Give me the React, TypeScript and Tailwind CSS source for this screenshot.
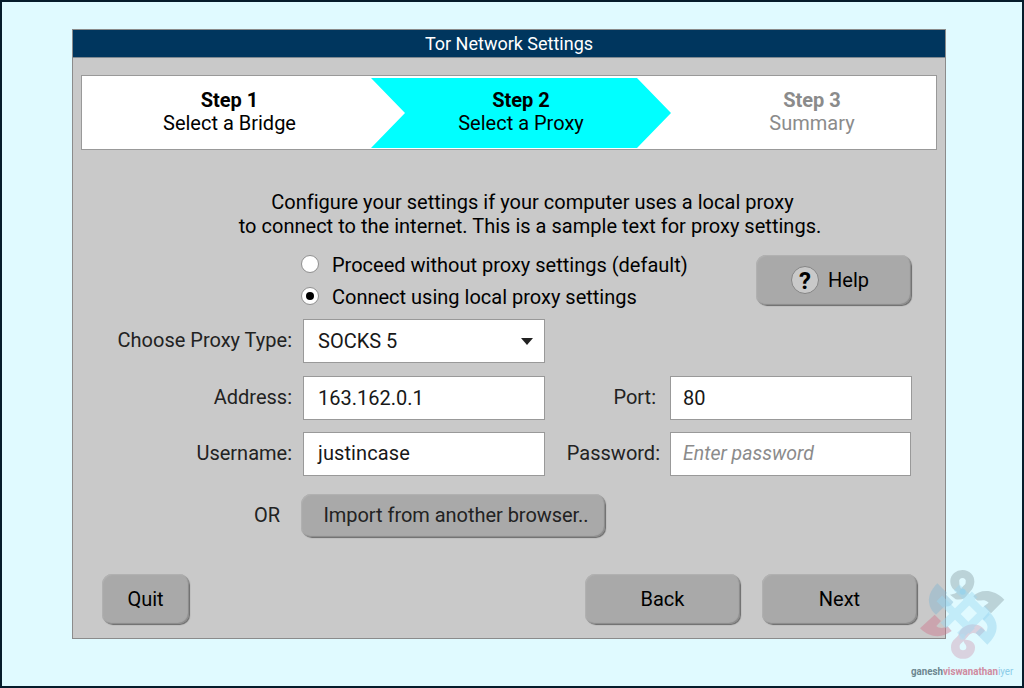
import type { ReactNode } from "react";

function Step({ title, label, className }: { title: string; label: string; className: string }) {
  return (
    <div className={`flex flex-col items-center text-[20px] leading-6 whitespace-nowrap ${className}`}>
      <span className="font-bold">{title}</span>
      <span className="-mt-px">{label}</span>
    </div>
  );
}

function Button({ children, className }: { children: ReactNode; className: string }) {
  return (
    <button
      type="button"
      className={`flex items-center justify-center rounded-[10px] bg-[#a9a9a9] text-[20px] whitespace-nowrap shadow-[inset_1px_1px_1px_#b2b2b2,inset_-1px_-1px_1px_#8a8a8a,1px_1px_1px_#6a6a6a] ${className}`}
    >
      {children}
    </button>
  );
}

function Radio({ checked, label }: { checked?: boolean; label: string }) {
  return (
    <label className="flex h-8 items-center">
      <span className="flex size-[18px] items-center justify-center rounded-full border border-[#8f8f8f] bg-white">
        {checked && <span className="size-2 rounded-full bg-black" />}
      </span>
      <span className="ml-[13px] pt-px text-[20px] whitespace-nowrap">{label}</span>
    </label>
  );
}

function Label({ children, className }: { children: ReactNode; className: string }) {
  return <span className={`pb-0.5 text-right text-[20px] whitespace-nowrap text-[#222] ${className}`}>{children}</span>;
}

function Field({ children, className }: { children: ReactNode; className: string }) {
  return (
    <div className={`flex h-11 items-center border border-[#999] bg-white whitespace-nowrap ${className}`}>
      {children}
    </div>
  );
}

function Watermark() {
  return (
    <div className="absolute top-[558px] left-[902px] h-[128px] w-[120px]">
      <svg viewBox="0 0 360 300" className="block h-[100px] w-[120px]" fill="none">
        <path fillRule="evenodd" d="M139 63A36 34 0 0 1 211 65C210 85 199 94 191 103C183 116 174 121 155 118L138 104C152 101 157 99 159 95C146 89 139 78 139 63ZM172 86C166 80 166 76 166 66A10 9 0 1 1 185 66C186 74 178 76 172 86Z" fill="#7f9299" fillOpacity="0.38" />
        <path d="M100 70C80 90 70 112 77 136C81 151 89 158 96 164L122 139C133 142 142 137 148 126L126 104C130 98 128 96 124 94Z" fill="#80b6d2" fillOpacity="0.42" />
        <path d="M208 109C226 88 268 84 301 119L261 160L240 139L254 128C239 114 226 126 218 120Z" fill="#7f9299" fillOpacity="0.38" />
        <path d="M48 205L92 164L111 183L97 198C107 207 120 204 131 199L143 213C119 232 81 238 48 205Z" fill="#cf788d" fillOpacity="0.45" />
        <path fillRule="evenodd" d="M243 212L226 229C219 219 207 215 196 224L183 239C202 238 214 250 213 263A36 34 0 0 1 141 262C141 242 153 239 163 226C168 205 186 193 206 193C224 194 236 200 243 212ZM178 243C172 251 166 252 167 262A10 9 0 0 0 187 262C187 253 182 253 178 243Z" fill="#cf9bb3" fillOpacity="0.42" />
        <path d="M255 155C287 184 286 220 250 254L215 219L231 203L247 215C256 197 247 188 235 178Z" fill="#8ccfeb" fillOpacity="0.42" />
        <g stroke="#9bd9f3" opacity="0.42" strokeWidth="24">
          <path d="M158 82L249 172" />
          <path d="M212 103L118 197" />
          <path d="M106 115L204 213" />
          <path d="M251 145L168 227" />
        </g>
        <circle cx="176" cy="95" r="9" fill="#8fd2ee" fillOpacity="0.6" />
        <circle cx="175" cy="230" r="9" fill="#b8dcee" fillOpacity="0.7" />
      </svg>
      <div className="ml-[6.5px] flex h-6 w-[140px] origin-left scale-x-[0.885] items-center text-[11px] font-bold whitespace-nowrap">
        <span className="text-[#6c8690]">ganesh</span>
        <span className="text-[#cf8ba0]">viswanathan</span>
        <span className="font-normal text-[#8bcde9]">iyer</span>
      </div>
    </div>
  );
}

export default function App() {
  return (
    <main className="relative h-[688px] w-[1024px] overflow-hidden border-2 border-[#061c2b] bg-[#e0faff] pt-[27px] pl-[70px] font-['Roboto',sans-serif] text-black">
      <section className="h-[610px] w-[874px] border border-[#8b8b8b] bg-[#c9c9c9]">
        <h1 className="flex h-7 items-center justify-center border-b border-[#7f8a92] bg-[#00365e] text-[18px] text-white">
          Tor Network Settings
        </h1>

        <div className="mt-[17px] ml-2 flex h-[75px] w-[856px] border border-[#999] bg-white">
          <Step title="Step 1" label="Select a Bridge" className="w-[289px] pt-3 pl-[6px]" />
          <div className="mt-[2px] h-[70px] w-[300px] bg-[#00ffff] [clip-path:polygon(0_0,266px_0,300px_50%,266px_100%,0_100%,34px_50%)]">
            <Step title="Step 2" label="Select a Proxy" className="pt-2.5" />
          </div>
          <Step title="Step 3" label="Summary" className="w-[265px] pt-3 pl-[17px] text-[#8b8b8b]" />
        </div>

        <p className="mt-10 ml-[20px] flex w-[874px] flex-col items-center text-[20px] leading-6 tracking-[0.02px] whitespace-nowrap">
          <span className="pl-[5px]">Configure your settings if your computer uses a local proxy</span>
          <span>to connect to the internet. This is a sample text for proxy settings.</span>
        </p>

        <div className="mt-2.5 flex h-[71px] pl-[228px]">
          <div className="w-[455px]">
            <Radio label="Proceed without proxy settings (default)" />
            <Radio checked label="Connect using local proxy settings" />
          </div>
          <Button className="mt-[7px] h-[50px] w-[155px] pr-[7px]">
            <span className="mr-[9px] flex size-7 items-center justify-center rounded-full border border-[#858585] bg-[#c9c9c9] pt-px text-[24px] font-bold">?</span>
            Help
          </Button>
        </div>

        <div className="flex h-11 items-center">
          <Label className="w-[219px]">Choose Proxy Type:</Label>
          <Field className="ml-[11px] w-[242px] justify-between pr-[11px] pl-3.5 text-[20px] text-[#181818]">
            SOCKS 5
            <svg viewBox="0 0 12 7" className="h-[7px] w-3"><path d="M0 0H12L6 7Z" fill="#222" /></svg>
          </Field>
        </div>
        <div className="mt-[13px] flex h-11 items-center">
          <Label className="w-[219px]">Address:</Label>
          <Field className="ml-[11px] w-[242px] pl-3.5 text-[20px] text-[#181818]">163.162.0.1</Field>
          <Label className="w-[111px]">Port:</Label>
          <Field className="ml-[14px] w-[242px] pl-3 text-[20px] text-[#181818]">80</Field>
        </div>
        <div className="mt-3 flex h-11 items-center">
          <Label className="w-[219px]">Username:</Label>
          <Field className="ml-[11px] w-[242px] pb-0.5 pl-3.5 text-[20px] tracking-[0.1px] text-[#181818]">justincase</Field>
          <Label className="w-[115px]">Password:</Label>
          <Field className="ml-[10px] w-[241px] pl-3 text-[19.5px] text-[#8b8b8b] italic">Enter password</Field>
        </div>

        <div className="mt-[18px] flex h-[43px] items-center">
          <Label className="w-[207px]">OR</Label>
          <Button className="ml-[21px] h-[43px] w-[304px] pl-[6px] text-[#222]"><span className="-mt-px tracking-[-0.04px]">Import from another browser..</span></Button>
        </div>

        <div className="mt-[37px] flex h-[50px] pl-[29px]">
          <Button className="w-[87px]">Quit</Button>
          <Button className="ml-[396px] w-[155px]">Back</Button>
          <Button className="ml-[22px] w-[155px]">Next</Button>
        </div>
      </section>
      <Watermark />
    </main>
  );
}
